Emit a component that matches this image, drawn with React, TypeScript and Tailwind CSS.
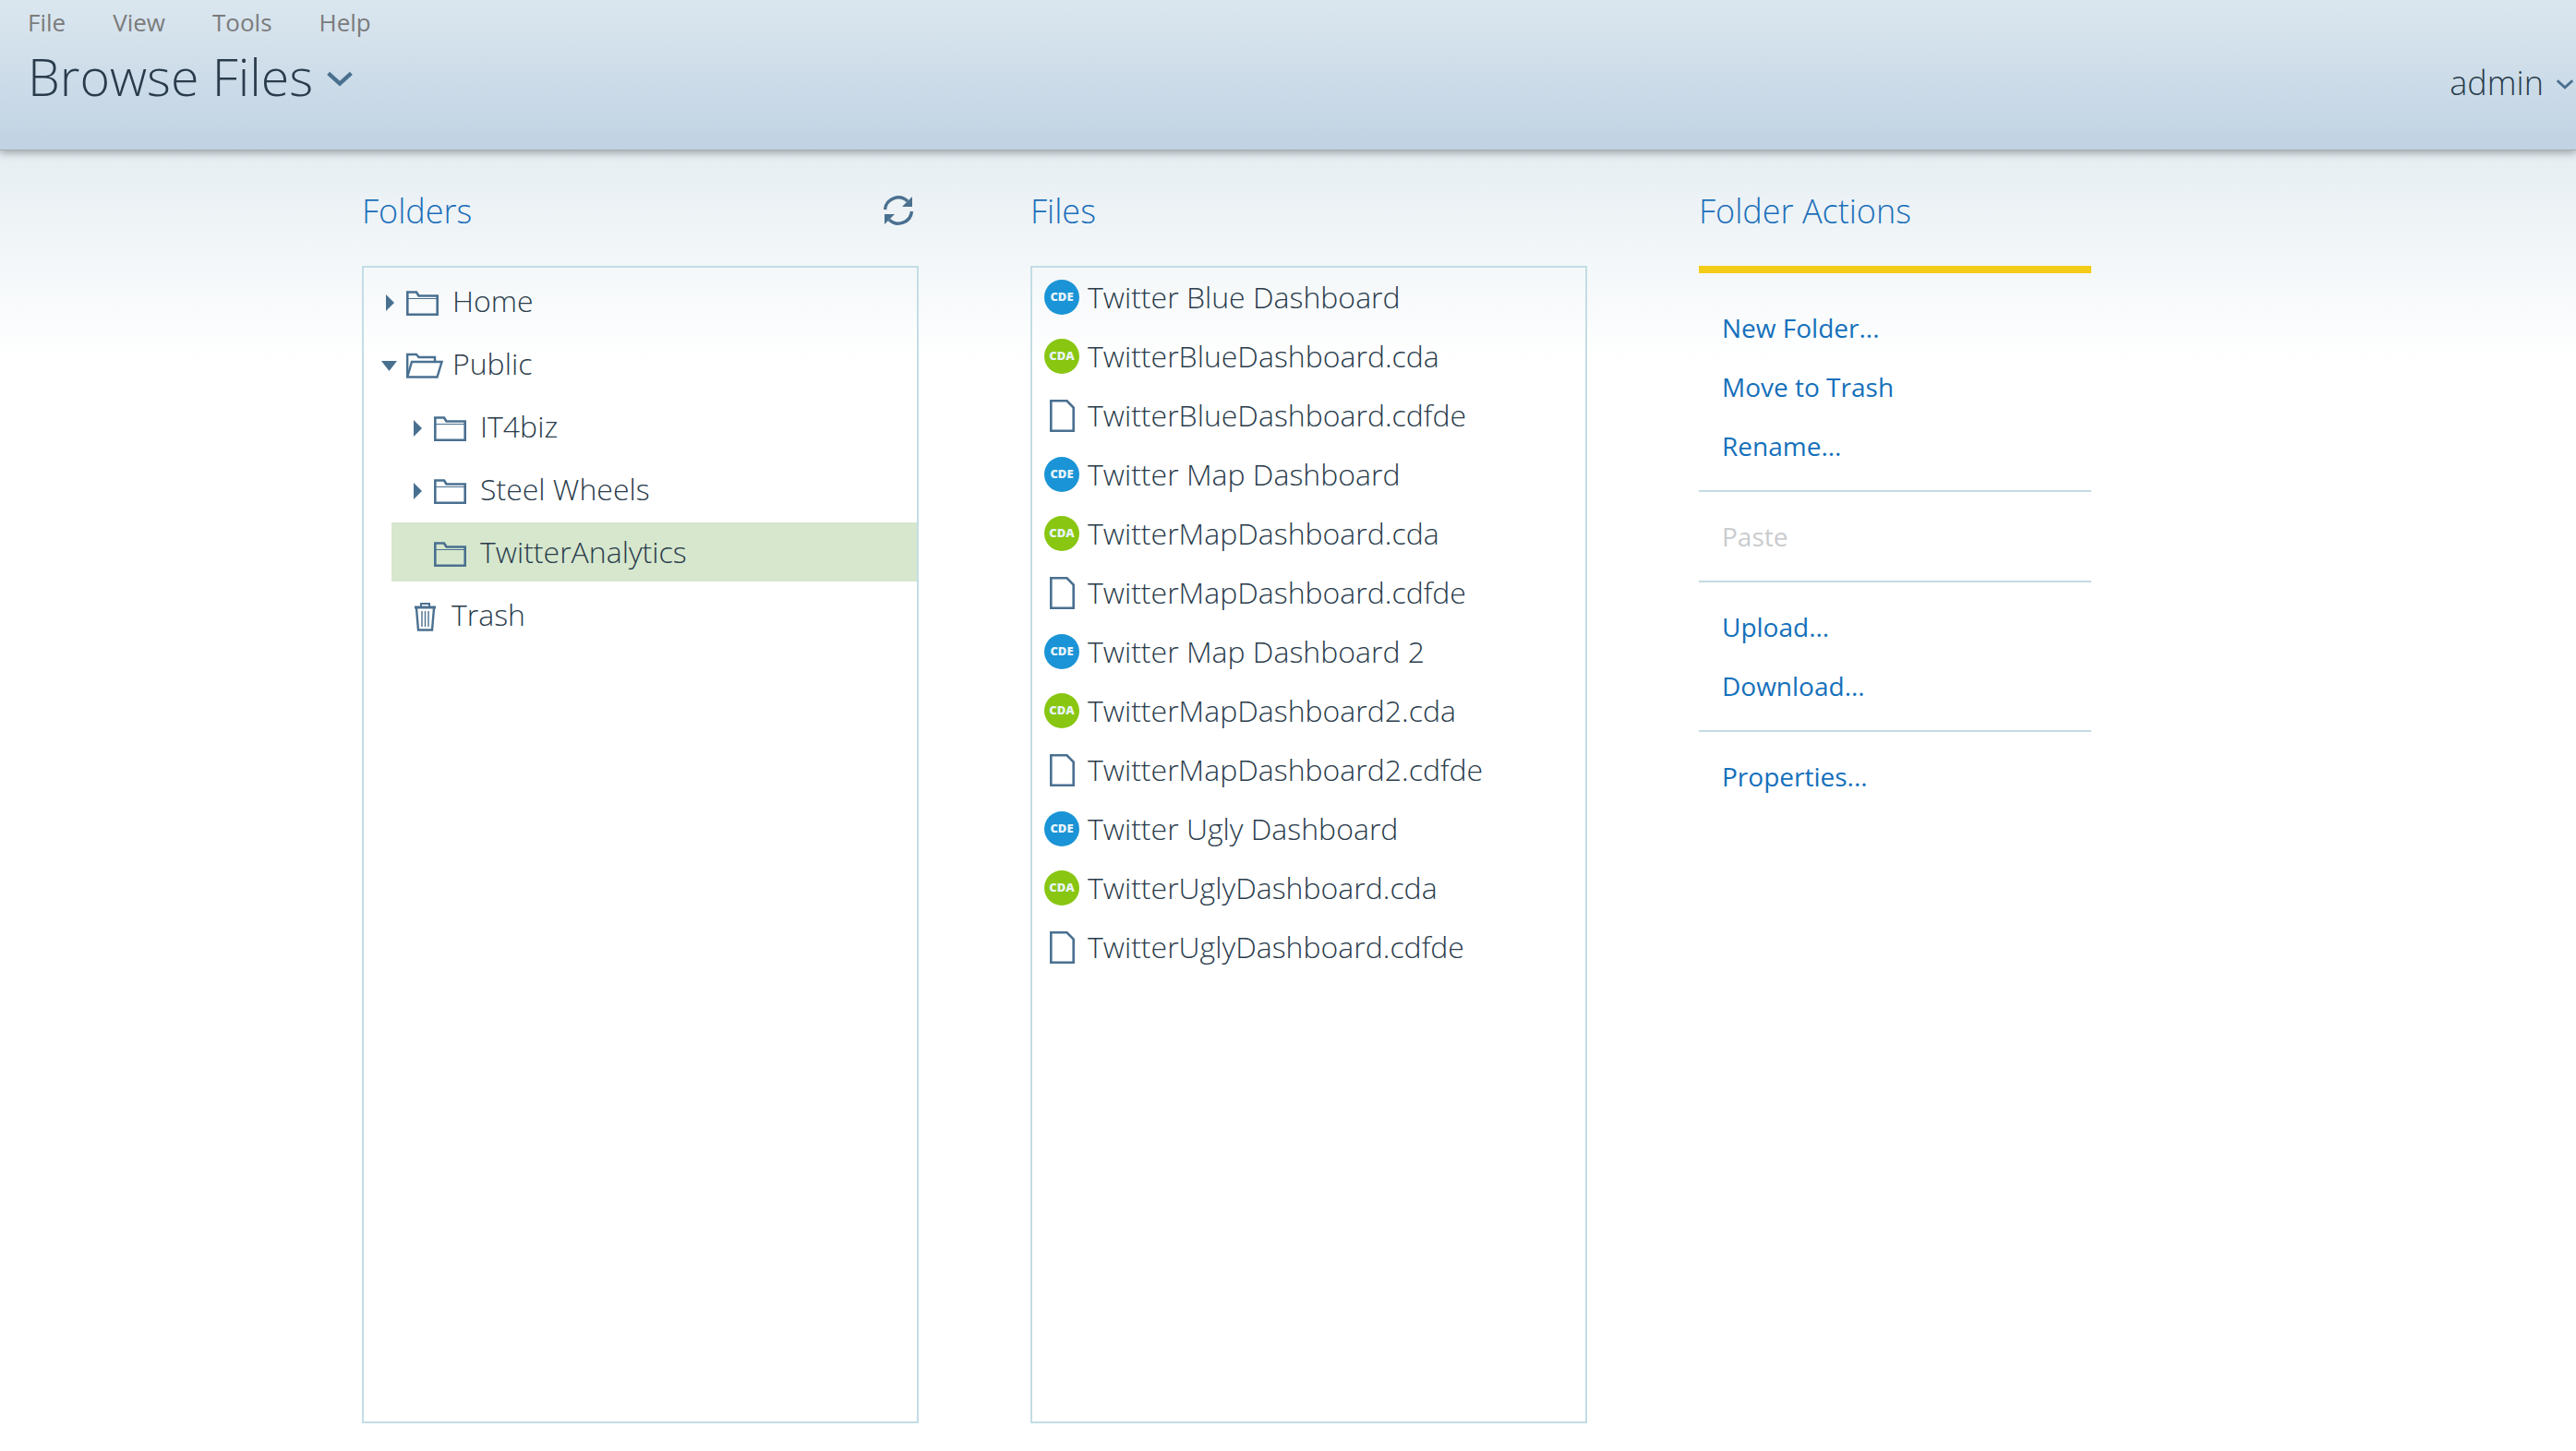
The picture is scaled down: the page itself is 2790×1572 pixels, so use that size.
import React from "react";

const ICON = "#4a7090";

function Chevron({ w = 26 }: { w?: number }) {
  return (
    <svg width={w} height={w * 0.6} viewBox="0 0 26 16" fill="none">
      <path d="M2 3 L13 13 L24 3" stroke={ICON} strokeWidth="3.8" />
    </svg>
  );
}

function Caret({ open }: { open?: boolean }) {
  return open ? (
    <svg width="17" height="11" viewBox="0 0 17 11"><path d="M0 0 H17 L8.5 11 Z" fill={ICON} /></svg>
  ) : (
    <svg width="9" height="18" viewBox="0 0 9 18"><path d="M0 0 L9 9 L0 18 Z" fill={ICON} /></svg>
  );
}

function Folder({ open }: { open?: boolean }) {
  return open ? (
    <svg width="40" height="28" viewBox="0 0 40 28" fill="none" stroke={ICON} strokeWidth="2.4">
      <path d="M1.2 26.5 V2 H11 L13.5 5 H31 V10" />
      <path d="M1.2 26.5 L6 10 H38.5 L33.5 26.5 Z" />
    </svg>
  ) : (
    <svg width="35" height="27" viewBox="0 0 35 27" fill="none" stroke={ICON} strokeWidth="2.6">
      <path d="M1.3 25.7 V1.5 H11 L13.5 5.5 H33.7 V25.7 Z" />
      <path d="M1.3 8.5 H33.7" strokeWidth="1" />
    </svg>
  );
}

function Trash() {
  return (
    <svg width="25" height="32" viewBox="0 0 25 32" fill="none" stroke={ICON}>
      <path d="M1 6 H24" strokeWidth="3" />
      <path d="M8 5 V2 H17 V5" strokeWidth="2" />
      <path d="M3 7 L5 30.5 H20 L22 7" strokeWidth="2.4" />
      <path d="M9 10 V27 M12.5 10 V27 M16 10 V27" strokeWidth="1.4" />
    </svg>
  );
}

function Refresh() {
  return (
    <svg width="34" height="32" viewBox="0 0 34 32" fill="none">
      <path d="M2.5 15 A14.5 14.5 0 0 1 27 6" stroke={ICON} strokeWidth="3.4" />
      <path d="M31.5 17 A14.5 14.5 0 0 1 7 26" stroke={ICON} strokeWidth="3.4" />
      <path d="M32 1 V12 H21 Z" fill={ICON} />
      <path d="M2 31 V20 H13 Z" fill={ICON} />
    </svg>
  );
}

function Badge({ label, color }: { label: string; color: string }) {
  return (
    <span
      className="flex h-[38px] w-[38px] shrink-0 items-center justify-center rounded-full text-[13px] font-extrabold text-[#e8f4fa]"
      style={{ backgroundColor: color }}
    >
      {label}
    </span>
  );
}

function FileIcon() {
  return (
    <span className="flex w-[38px] shrink-0 justify-center">
      <svg width="27" height="35" viewBox="0 0 27 35" fill="none" stroke={ICON} strokeWidth="2.6">
        <path d="M1.3 1.3 H18.5 L25.7 8.5 V33.7 H1.3 Z" />
      </svg>
    </span>
  );
}

const tree = [
  { label: "Home", indent: 0, caret: "closed" },
  { label: "Public", indent: 0, caret: "open" },
  { label: "IT4biz", indent: 1, caret: "closed" },
  { label: "Steel Wheels", indent: 1, caret: "closed" },
  { label: "TwitterAnalytics", indent: 1, caret: "none", selected: true },
];

const files: [string, string][] = [
  ["cde", "Twitter Blue Dashboard"],
  ["cda", "TwitterBlueDashboard.cda"],
  ["doc", "TwitterBlueDashboard.cdfde"],
  ["cde", "Twitter Map Dashboard"],
  ["cda", "TwitterMapDashboard.cda"],
  ["doc", "TwitterMapDashboard.cdfde"],
  ["cde", "Twitter Map Dashboard 2"],
  ["cda", "TwitterMapDashboard2.cda"],
  ["doc", "TwitterMapDashboard2.cdfde"],
  ["cde", "Twitter Ugly Dashboard"],
  ["cda", "TwitterUglyDashboard.cda"],
  ["doc", "TwitterUglyDashboard.cdfde"],
];

function Heading({ children }: { children: React.ReactNode }) {
  return <h2 className="text-[36px] font-light leading-[50px] text-[#1b6fba]">{children}</h2>;
}

function Action({ children, disabled }: { children: React.ReactNode; disabled?: boolean }) {
  return (
    <div className={`flex h-[64px] items-center pl-[25px] text-[28px] ${disabled ? "text-[#c9ccce]" : "text-[#1570bb]"}`}>
      {children}
    </div>
  );
}

function Divider() {
  return <div className="my-[16px] h-[2px] bg-[#c3dbe3]" />;
}

export default function App() {
  return (
    <div
      className="flex h-[1572px] w-[2790px] flex-col overflow-hidden bg-white text-[#2a3c4c]"
      style={{ fontFamily: '"Open Sans", sans-serif' }}
    >
      <header className="relative z-10 h-[163px] shrink-0 border-b border-[#a9adb0] bg-linear-to-b from-[#dbe7ef] to-[#c0d2e3] shadow-[0_3px_8px_rgba(70,80,90,0.45)]">
        <nav className="flex h-[48px] items-center gap-[51px] pl-[30px] text-[26px] text-[#7b7b7b]">
          <span>File</span>
          <span>View</span>
          <span>Tools</span>
          <span>Help</span>
        </nav>
        <div className="flex items-center justify-between pl-[30px] pr-[2px]">
          <div className="flex items-center gap-[14px]">
            <span className="text-[55.5px] font-light leading-[70px]">Browse Files</span>
            <span className="mt-[4px]"><Chevron w={30} /></span>
          </div>
          <div className="mt-[14px] flex items-center gap-[13px]">
            <span className="text-[36px] font-light leading-[50px]">admin</span>
            <span className="mt-[2px]"><Chevron w={20} /></span>
          </div>
        </div>
      </header>

      <main className="flex flex-1 gap-[121px] bg-linear-to-b from-[#e6eef2] to-white to-[230px] pl-[392px]">
        <section className="w-[603px]">
          <div className="mt-[41px] flex h-[50px] items-center justify-between pr-[2px]">
            <Heading>Folders</Heading>
            <span className="mb-[2px] mr-[3px]"><Refresh /></span>
          </div>
          <div className="mt-[34px] flex h-[1254px] flex-col border-2 border-[#c3dde6] pt-[4px]">
            {tree.map((n) => (
              <div key={n.label} className={`${n.selected ? "mb-[4px] h-[64px] bg-[#d6e7cd] pt-[4px]" : "h-[68px]"} ${n.indent ? "ml-[30px]" : ""} flex items-center`}>
                <span className="flex w-[46px] shrink-0 items-center justify-end pr-[13px] pl-[14px]">
                  {n.caret === "open" && <span className="mr-[-3px] flex"><Caret open /></span>}
                  {n.caret === "closed" && <Caret />}
                </span>
                <span className="flex w-[50px] shrink-0"><Folder open={n.caret === "open"} /></span>
                <span className="-mt-[4px] text-[32px] font-light">{n.label}</span>
              </div>
            ))}
            <div className="flex h-[68px] items-center">
              <span className="ml-[54px] flex w-[25px] shrink-0"><Trash /></span>
              <span className="-mt-[4px] ml-[16px] text-[32px] font-light">Trash</span>
            </div>
          </div>
        </section>

        <section className="w-[603px]">
          <div className="mt-[41px] flex h-[50px] items-center"><Heading>Files</Heading></div>
          <div className="mt-[34px] flex h-[1254px] flex-col border-2 border-[#c3dde6] pl-[13px]">
            {files.map(([t, name]) => (
              <div key={name} className="flex h-[64px] shrink-0 items-center gap-[9px]">
                {t === "cde" && <Badge label="CDE" color="#1a94d6" />}
                {t === "cda" && <Badge label="CDA" color="#88c611" />}
                {t === "doc" && <FileIcon />}
                <span className="text-[32px] font-light">{name}</span>
              </div>
            ))}
          </div>
        </section>

        <section className="w-[425px]">
          <div className="mt-[41px] flex h-[50px] items-center"><Heading>Folder Actions</Heading></div>
          <div className="mt-[34px] h-[8px] bg-[#f3cc17]" />
          <div className="pt-[27px]">
            <Action>New Folder...</Action>
            <Action>Move to Trash</Action>
            <Action>Rename...</Action>
            <Divider />
            <Action disabled>Paste</Action>
            <Divider />
            <Action>Upload...</Action>
            <Action>Download...</Action>
            <Divider />
            <Action>Properties...</Action>
          </div>
        </section>
      </main>
    </div>
  );
}
